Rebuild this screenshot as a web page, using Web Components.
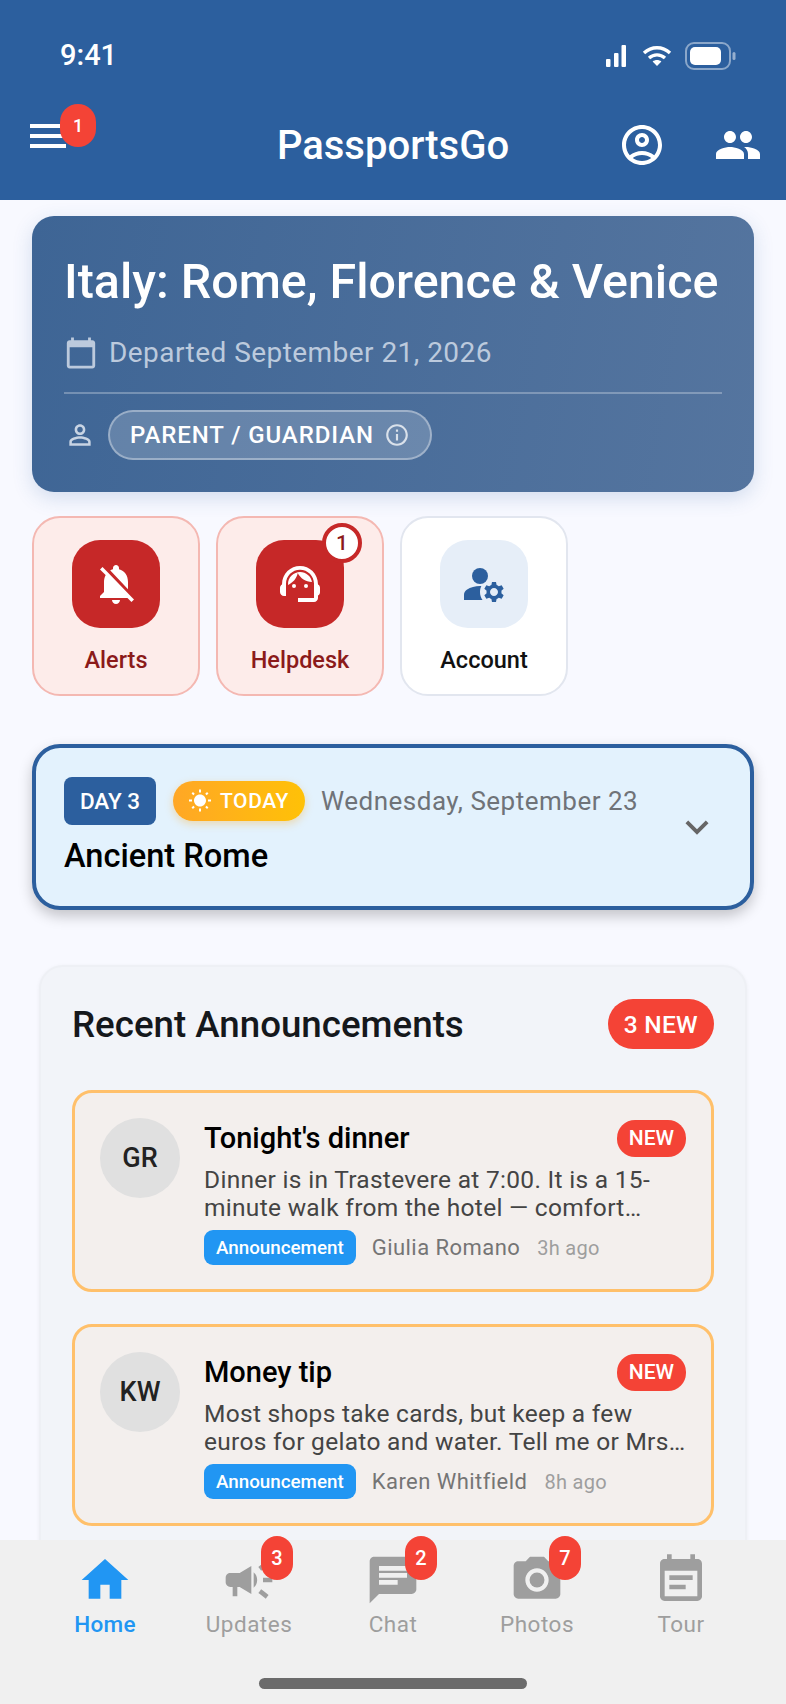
<!DOCTYPE html>
<html>
<head>
<meta charset="utf-8">
<title>PassportsGo</title>
<style>
html, body { margin: 0; padding: 0; height: 100%; }
body { font-family: Roboto, "Liberation Sans", sans-serif; background: #f8f9ff; overflow: hidden; }
</style>
</head>
<body>
<app-shell>
    <app-header></app-header>
    <trip-hero title-text="Italy: Rome, Florence &amp; Venice" date="Departed September 21, 2026" role="PARENT / GUARDIAN"></trip-hero>
    <action-row>
        <action-tile label="Alerts" icon="bell" tone="red"></action-tile>
        <action-tile label="Helpdesk" icon="agent" tone="red" count="1"></action-tile>
        <action-tile label="Account" icon="account" tone="blue"></action-tile>
    </action-row>
    <day-card day="DAY 3" date="Wednesday, September 23" place="Ancient Rome"></day-card>
    <announce-panel heading="Recent Announcements" count="3 NEW">
        <announce-card initials="GR" heading="Tonight's dinner" author="Giulia Romano" ago="3h ago"
            line1="Dinner is in Trastevere at 7:00. It is a 15-" line2="minute walk from the hotel — comfort…"></announce-card>
        <announce-card initials="KW" heading="Money tip" author="Karen Whitfield" ago="8h ago"
            line1="Most shops take cards, but keep a few" line2="euros for gelato and water. Tell me or Mrs…"></announce-card>
    </announce-panel>
    <tab-bar slot="tabs">
        <tab-item label="Home" icon="home" active></tab-item>
        <tab-item label="Updates" icon="campaign" count="3"></tab-item>
        <tab-item label="Chat" icon="chat" count="2"></tab-item>
        <tab-item label="Photos" icon="camera" count="7"></tab-item>
        <tab-item label="Tour" icon="note"></tab-item>
    </tab-bar>
</app-shell>

<script>
// material icon paths, all on a 24 box
const ICONS = {
    menuPerson: '<path d="M12 2C6.48 2 2 6.48 2 12s4.48 10 10 10 10-4.48 10-10S17.52 2 12 2zM7.35 18.5C8.66 17.56 10.26 17 12 17s3.34.56 4.65 1.5C15.34 19.44 13.74 20 12 20s-3.34-.56-4.65-1.5zm10.79-1.38C16.45 15.8 14.32 15 12 15s-4.45.8-6.14 2.12C4.7 15.73 4 13.95 4 12c0-4.42 3.58-8 8-8s8 3.58 8 8c0 1.95-.7 3.73-1.86 5.12z"/><path d="M12 6c-1.93 0-3.5 1.57-3.5 3.5S10.07 13 12 13s3.5-1.57 3.5-3.5S13.93 6 12 6zm0 5c-.83 0-1.5-.67-1.5-1.5S11.17 8 12 8s1.5.67 1.5 1.5S12.83 11 12 11z"/>',
    people: '<path d="M16 11c1.66 0 2.99-1.34 2.99-3S17.66 5 16 5c-1.66 0-3 1.34-3 3s1.34 3 3 3zm-8 0c1.66 0 2.99-1.34 2.99-3S9.66 5 8 5C6.34 5 5 6.34 5 8s1.34 3 3 3zm0 2c-2.33 0-7 1.17-7 3.5V19h14v-2.5c0-2.33-4.67-3.5-7-3.5zm8 0c-.29 0-.62.02-.97.05 1.16.84 1.97 1.97 1.97 3.45V19h6v-2.5c0-2.33-4.67-3.5-7-3.5z"/>',
    calendar: '<path d="M20 3h-1V1h-2v2H7V1H5v2H4c-1.1 0-2 .9-2 2v16c0 1.1.9 2 2 2h16c1.1 0 2-.9 2-2V5c0-1.1-.9-2-2-2zm0 18H4V8h16v13z"/>',
    person: '<path d="M12 5.9c1.16 0 2.1.94 2.1 2.1s-.94 2.1-2.1 2.1S9.9 9.16 9.9 8s.94-2.1 2.1-2.1m0 9c2.97 0 6.1 1.46 6.1 2.1v1.1H5.9V17c0-.64 3.13-2.1 6.1-2.1M12 4C9.79 4 8 5.79 8 8s1.79 4 4 4 4-1.79 4-4-1.79-4-4-4zm0 9c-2.67 0-8 1.34-8 4v3h16v-3c0-2.66-5.33-4-8-4z"/>',
    info: '<path d="M11 7h2v2h-2zm0 4h2v6h-2zm1-9C6.48 2 2 6.48 2 12s4.48 10 10 10 10-4.48 10-10S17.52 2 12 2zm0 18c-4.41 0-8-3.59-8-8s3.59-8 8-8 8 3.59 8 8-3.59 8-8 8z"/>',
    bell: '<path d="M20 18.69L7.84 6.14 5.27 3.49 4 4.76l2.8 2.8v.01c-.52.99-.8 2.16-.8 3.42v5l-2 2v1h13.73l2 2L21 19.72l-1-1.03zM12 22c1.11 0 2-.89 2-2h-4c0 1.11.89 2 2 2zm6-7.32V11c0-3.08-1.64-5.64-4.5-6.32V4c0-.83-.67-1.5-1.5-1.5s-1.5.67-1.5 1.5v.68c-.15.03-.29.08-.42.12-.1.03-.2.07-.3.11h-.01c-.2.08-.4.17-.59.27-.01 0-.01 0-.02.01L18 14.68z"/>',
    agent: '<path d="M21 12.22C21 6.73 16.74 3 12 3c-4.69 0-9 3.65-9 9.28-.6.34-1 .98-1 1.72v2c0 1.1.9 2 2 2h1v-6.1c0-3.87 3.13-7 7-7s7 3.13 7 7V19h-8v2h8c1.1 0 2-.9 2-2v-1.22c.59-.31 1-.92 1-1.64v-2.3c0-.7-.41-1.31-1-1.62z"/><circle cx="9" cy="13" r="1"/><circle cx="15" cy="13" r="1"/><path d="M18 11.03C17.52 8.18 15.04 6 12.05 6c-3.03 0-6.29 2.51-6.03 6.45 2.47-1.01 4.33-3.21 4.86-5.89 1.31 2.63 4 4.44 7.12 4.47z"/>',
    account: '<circle cx="10" cy="8" r="4"/><path d="M10.67 13.02c-.22-.01-.44-.02-.67-.02-2.42 0-4.68.67-6.61 1.82-.88.52-1.39 1.5-1.39 2.53V20h9.26c-.79-1.13-1.26-2.51-1.26-4 0-1.07.25-2.07.67-2.98z"/><path d="M20.75 16c0-.22-.03-.42-.06-.63l1.14-1.01-1-1.73-1.45.49c-.32-.27-.68-.48-1.08-.63L18 11h-2l-.3 1.49c-.4.15-.76.36-1.08.63l-1.45-.49-1 1.73 1.14 1.01c-.03.21-.06.41-.06.63s.03.42.06.63l-1.14 1.01 1 1.73 1.45-.49c.32.27.68.48 1.08.63L16 21h2l.3-1.49c.4-.15.76-.36 1.08-.63l1.45.49 1-1.73-1.14-1.01c.03-.21.06-.41.06-.63zM17 18c-1.1 0-2-.9-2-2s.9-2 2-2 2 .9 2 2-.9 2-2 2z"/>',
    sun: '<path d="M6.76 4.84l-1.8-1.79-1.41 1.41 1.79 1.79 1.42-1.41zM4 10.5H1v2h3v-2zm9-9.95h-2V3.5h2V.55zm7.45 3.91l-1.41-1.41-1.79 1.79 1.41 1.41 1.79-1.79zm-3.21 13.7l1.79 1.8 1.41-1.41-1.8-1.79-1.4 1.4zM20 10.5v2h3v-2h-3zm-8-5c-3.31 0-6 2.69-6 6s2.69 6 6 6 6-2.69 6-6-2.69-6-6-6zm-1 16.95h2V19.5h-2v2.95zm-7.45-3.91l1.41 1.41 1.79-1.8-1.41-1.41-1.79 1.8z"/>',
    chevron: '<path d="M16.59 8.59L12 13.17 7.41 8.59 6 10l6 6 6-6z"/>',
    home: '<path d="M10 20v-6h4v6h5v-8h3L12 3 2 12h3v8z"/>',
    campaign: '<path d="M18 11v2h4v-2h-4zm-2 6.61c.96.71 2.21 1.65 3.2 2.39.4-.53.8-1.07 1.2-1.6-.99-.74-2.24-1.68-3.2-2.4-.4.54-.8 1.08-1.2 1.61zM20.4 5.6c-.4-.53-.8-1.07-1.2-1.6-.99.74-2.24 1.68-3.2 2.4.4.53.8 1.07 1.2 1.6.96-.72 2.21-1.65 3.2-2.4zM4 9c-1.1 0-2 .9-2 2v2c0 1.1.9 2 2 2h1v4h2v-4h1l5 3V6L8 9H4zm11.5 3c0-1.33-.58-2.53-1.5-3.35v6.69c.92-.81 1.5-2.01 1.5-3.34z"/>',
    chat: '<path d="M20 2H4c-1.1 0-1.99.9-1.99 2L2 22l4-4h14c1.1 0 2-.9 2-2V4c0-1.1-.9-2-2-2zM6 9h12v2H6V9zm8 5H6v-2h8v2zm4-6H6V6h12v2z"/>',
    camera: '<circle cx="12" cy="12" r="3.2"/><path d="M9 2L7.17 4H4c-1.1 0-2 .9-2 2v12c0 1.1.9 2 2 2h16c1.1 0 2-.9 2-2V6c0-1.1-.9-2-2-2h-3.17L15 2H9zm3 15c-2.76 0-5-2.24-5-5s2.24-5 5-5 5 2.24 5 5-2.24 5-5 5z"/>',
    note: '<path d="M17 10H7v2h10v-2zm2-7h-1V1h-2v2H8V1H6v2H5c-1.11 0-1.99.9-1.99 2L3 19c0 1.1.89 2 2 2h14c1.1 0 2-.9 2-2V5c0-1.1-.9-2-2-2zm0 16H5V8h14v11zm-5-5H7v2h7v-2z"/>'
};

function icon(name, size) {
    return `<svg width="${size}" height="${size}" viewBox="0 0 24 24" fill="currentColor">${ICONS[name]}</svg>`;
}

class BaseElement extends HTMLElement {
    constructor() {
        super();
        this.attachShadow({ mode: 'open' });
    }
    connectedCallback() {
        const template = document.createElement('template');
        template.innerHTML = `<style>${this.getStyles()}</style>${this.getTemplate()}`;
        this.shadowRoot.appendChild(template.content.cloneNode(true));
    }
    attr(name) {
        return this.getAttribute(name) || '';
    }
}

class AppShell extends BaseElement {
    getStyles() {
        return `
        :host { display: flex; flex-direction: column; height: 1704px; width: 786px; overflow: hidden; }
        .main { flex: 1; min-height: 0; overflow: hidden; display: flex; flex-direction: column; }
        `;
    }
    getTemplate() {
        return `<slot name="header"></slot><div class="main"><slot></slot></div><slot name="tabs"></slot>`;
    }
}

class AppHeader extends BaseElement {
    connectedCallback() {
        this.slot = 'header';
        super.connectedCallback();
    }
    getStyles() {
        return `
        :host { display: block; height: 200px; background: #2c5f9e; color: #fff; flex: none; }
        .status { height: 90px; display: flex; align-items: center; padding: 20px 50px 0 60px; box-sizing: border-box; justify-content: space-between; }
        .time { font-size: 29px; font-weight: 500; }
        .status-icons { display: flex; align-items: center; gap: 16px; margin-top: 2px; }
        .bar { height: 110px; display: flex; align-items: center; padding: 0 24px 0 30px; position: relative; }
        .menu { width: 36px; height: 24px; display: flex; flex-direction: column; justify-content: space-between; position: relative; margin-top: -18px; }
        .menu i { display: block; height: 4px; background: #fff; }
        .badge { position: absolute; left: 30px; top: -20px; width: 36px; height: 43px; border-radius: 18px; background: #f44336; font-size: 18px; font-weight: 500; display: flex; align-items: center; justify-content: center; }
        .title { position: absolute; left: 0; right: 0; text-align: center; font-size: 40px; font-weight: 500; }
        .right { margin-left: auto; display: flex; align-items: center; gap: 48px; }
        svg { display: block; }
        `;
    }
    getTemplate() {
        return `
        <div class="status">
            <span class="time">9:41</span>
            <div class="status-icons">
                <svg width="20" height="22" viewBox="0 0 20 22" fill="#fff"><rect x="0" y="14" width="4.5" height="8" rx="1"/><rect x="8" y="8" width="4.5" height="14" rx="1"/><rect x="15.5" y="0" width="4.5" height="22" rx="1"/></svg>
                <svg width="30" height="20" viewBox="0 0 30 20" fill="none" stroke="#fff" stroke-width="3.4"><path d="M2 7C9.5 0 20.5 0 28 7"/><path d="M7 12c4.8-4.2 11.2-4.2 16 0"/><path d="M15 20l-4.4-4.6c2.6-2 6.2-2 8.8 0z" fill="#fff" stroke="none"/></svg>
                <svg width="51" height="28" viewBox="0 0 51 28" style="margin-left:-3px"><rect x="1" y="1" width="44" height="26" rx="8" fill="none" stroke="#fff" stroke-opacity=".45" stroke-width="2"/><rect x="5" y="5" width="31" height="18" rx="5" fill="#fff"/><rect x="47.5" y="10" width="3" height="8" rx="1.5" fill="#fff" fill-opacity=".5"/></svg>
            </div>
        </div>
        <div class="bar">
            <div class="menu"><i></i><i></i><i></i><span class="badge">1</span></div>
            <div class="title">PassportsGo</div>
            <div class="right">${icon('menuPerson', 48)}${icon('people', 48)}</div>
        </div>
        `;
    }
}

class TripHero extends BaseElement {
    getStyles() {
        return `
        :host { display: block; flex: none; margin: 16px 32px 0; height: 276px; box-sizing: border-box; padding: 34px 32px 0; border-radius: 22px; color: #fff;
            background: linear-gradient(100deg, #3e6595, #55759f); box-shadow: 0 6px 20px rgba(44,95,158,.18); }
        h1 { margin: 0; font-size: 48.4px; line-height: 64px; font-weight: 500; white-space: nowrap; }
        .date { display: flex; align-items: center; gap: 11px; margin-top: 21px; font-size: 28px; line-height: 36px; color: #bccadd; letter-spacing: .45px; }
        .rule { height: 2px; background: rgba(255,255,255,.28); margin: 21px 0 16px; }
        .role { display: flex; align-items: center; gap: 12px; color: #c8d4e4; }
        .pill { display: flex; align-items: center; gap: 10px; height: 50px; padding: 0 20px 0 20px; box-sizing: border-box; border: 2px solid rgba(255,255,255,.35); border-radius: 25px; background: rgba(255,255,255,.18); color: #fff; font-size: 24px; font-weight: 500; letter-spacing: .9px; }
        svg { display: block; flex: none; }
        .pill svg { opacity: .75; }
        `;
    }
    getTemplate() {
        return `
        <h1>${this.attr('title-text')}</h1>
        <div class="date">${icon('calendar', 34)}<span>${this.attr('date')}</span></div>
        <div class="rule"></div>
        <div class="role">${icon('person', 32)}<div class="pill"><span>${this.attr('role')}</span>${icon('info', 26)}</div></div>
        `;
    }
}

class ActionRow extends BaseElement {
    getStyles() {
        return `:host { display: flex; flex: none; gap: 16px; margin: 24px 32px 0; }`;
    }
    getTemplate() {
        return `<slot></slot>`;
    }
}

class ActionTile extends BaseElement {
    getStyles() {
        const red = this.attr('tone') === 'red';
        return `
        :host { display: flex; flex-direction: column; align-items: center; width: 168px; height: 180px; box-sizing: border-box; padding-top: 22px; border-radius: 28px;
            border: 2px solid ${red ? '#f4b8b2' : '#e2e6ef'}; background: ${red ? '#fdecea' : '#fff'}; }
        .box { width: 88px; height: 88px; border-radius: 28px; background: ${red ? '#c62828' : '#e6eef8'}; color: ${red ? '#fff' : '#2c5f9e'}; display: flex; align-items: center; justify-content: center; position: relative; }
        .label { margin-top: 16px; font-size: 23.5px; line-height: 32px; font-weight: 500; color: ${red ? '#8b1a1a' : '#111'}; }
        .count { position: absolute; top: -17px; right: -18px; width: 40px; height: 40px; box-sizing: border-box; border-radius: 50%; background: #fff; border: 4px solid #c62828; color: #8b1a1a; font-size: 21px; font-weight: 500; display: flex; align-items: center; justify-content: center; }
        svg { display: block; }
        `;
    }
    getTemplate() {
        const count = this.attr('count');
        return `
        <div class="box">${icon(this.attr('icon'), 48)}${count ? `<span class="count">${count}</span>` : ''}</div>
        <div class="label">${this.attr('label')}</div>
        `;
    }
}

class DayCard extends BaseElement {
    getStyles() {
        return `
        :host { display: flex; flex: none; align-items: center; margin: 48px 32px 0; height: 166px; box-sizing: border-box; padding: 0 28px; border: 4px solid #2c5f9e; border-radius: 28px; background: #e3f2fd; box-shadow: 0 6px 14px rgba(0,0,0,.22); }
        .col { flex: 1; min-width: 0; }
        .top { display: flex; align-items: center; }
        .day { width: 92px; height: 48px; border-radius: 8px; background: #2c5f9e; color: #fff; font-size: 22.5px; font-weight: 500; display: flex; align-items: center; justify-content: center; }
        .today { display: flex; align-items: center; gap: 8px; height: 40px; margin-left: 17px; padding: 0 16px 0 15px; border-radius: 20px; background: linear-gradient(90deg, #ffa726, #ffc107); box-shadow: 0 3px 8px rgba(255,160,0,.3); color: #fff; font-size: 21px; font-weight: 500; letter-spacing: .6px; }
        .date { margin-left: 16px; font-size: 26px; color: #6f7378; letter-spacing: .5px; white-space: nowrap; }
        .place { margin-top: 9px; font-size: 32.6px; line-height: 44px; font-weight: 500; color: #000; }
        .chev { color: #666; flex: none; margin-right: 2px; }
        svg { display: block; }
        `;
    }
    getTemplate() {
        return `
        <div class="col">
            <div class="top">
                <span class="day">${this.attr('day')}</span>
                <span class="today">${icon('sun', 24)}TODAY</span>
                <span class="date">${this.attr('date')}</span>
            </div>
            <div class="place">${this.attr('place')}</div>
        </div>
        <div class="chev">${icon('chevron', 46)}</div>
        `;
    }
}

class AnnouncePanel extends BaseElement {
    getStyles() {
        return `
        :host { display: block; flex: none; margin: 55px 39px 0; padding: 32px 31px 40px; box-sizing: border-box; border: 2px solid #eef0f5; border-radius: 24px; background: #f2f4f9; box-shadow: 0 1px 4px rgba(0,0,0,.05); }
        .head { display: flex; align-items: center; justify-content: space-between; margin-bottom: 41px; }
        h2 { margin: 0; font-size: 36.7px; font-weight: 500; color: #15181c; }
        .count { display: flex; align-items: center; height: 50px; padding: 0 16px; border-radius: 25px; background: #f44336; color: #fff; font-size: 24.5px; font-weight: 500; letter-spacing: .3px; }
        .list { display: flex; flex-direction: column; gap: 32px; }
        `;
    }
    getTemplate() {
        return `
        <div class="head"><h2>${this.attr('heading')}</h2><span class="count">${this.attr('count')}</span></div>
        <div class="list"><slot></slot></div>
        `;
    }
}

class AnnounceCard extends BaseElement {
    getStyles() {
        return `
        :host { display: flex; gap: 24px; height: 202px; box-sizing: border-box; padding: 25px 25px 0; border: 3px solid #ffc06b; border-radius: 20px; background: #f3efed; }
        .avatar { flex: none; width: 80px; height: 80px; border-radius: 50%; background: #e0e0e0; color: #222; font-size: 27px; font-weight: 500; display: flex; align-items: center; justify-content: center; }
        .col { flex: 1; min-width: 0; }
        .top { display: flex; align-items: center; justify-content: space-between; height: 38px; margin-top: 1px; }
        h3 { margin: 0; font-size: 29px; font-weight: 500; color: #000; }
        .new { display: flex; align-items: center; height: 37px; padding: 0 12px; border-radius: 18px; background: #f44336; color: #fff; font-size: 21px; font-weight: 500; }
        .body { margin-top: 9px; font-size: 24.5px; line-height: 28px; color: #444; letter-spacing: .3px; white-space: nowrap; }
        .meta { display: flex; align-items: center; margin-top: 8px; }
        .tag { height: 35px; padding: 0 12px; border-radius: 9px; background: #2196f3; color: #fff; font-size: 18.8px; font-weight: 500; display: flex; align-items: center; }
        .author { margin-left: 16px; font-size: 22px; color: #757575; letter-spacing: .45px; }
        .ago { margin-left: 17px; font-size: 20px; color: #9e9e9e; letter-spacing: .3px; }
        `;
    }
    getTemplate() {
        return `
        <div class="avatar">${this.attr('initials')}</div>
        <div class="col">
            <div class="top"><h3>${this.attr('heading')}</h3><span class="new">NEW</span></div>
            <div class="body"><div>${this.attr('line1')}</div><div>${this.attr('line2')}</div></div>
            <div class="meta"><span class="tag">Announcement</span><span class="author">${this.attr('author')}</span><span class="ago">${this.attr('ago')}</span></div>
        </div>
        `;
    }
}

class TabBar extends BaseElement {
    getStyles() {
        return `
        :host { display: block; flex: none; height: 164px; background: #f0f0f0; position: relative; }
        .items { display: grid; grid-template-columns: repeat(5, 144px); justify-content: center; padding-top: 12px; }
        .home { position: absolute; left: 259px; top: 138px; width: 268px; height: 11px; border-radius: 6px; background: #6b6b6b; }
        `;
    }
    getTemplate() {
        return `<div class="items"><slot></slot></div><div class="home"></div>`;
    }
}

class TabItem extends BaseElement {
    getStyles() {
        const on = this.hasAttribute('active');
        return `
        :host { display: flex; flex-direction: column; align-items: center; color: ${on ? '#2196f3' : '#9e9e9e'}; }
        .wrap { position: relative; width: 56px; height: 56px; }
        .count { position: absolute; left: 40px; top: -16px; width: 32px; height: 44px; border-radius: 16px; background: #f44336; color: #fff; font-size: 20px; font-weight: 500; display: flex; align-items: center; justify-content: center; }
        .label { margin-top: 1px; font-size: 22.5px; line-height: 30px; font-weight: ${on ? 500 : 400}; letter-spacing: ${on ? '.3px' : '.5px'}; }
        svg { display: block; }
        `;
    }
    getTemplate() {
        const count = this.attr('count');
        return `
        <div class="wrap">${icon(this.attr('icon'), 56)}${count ? `<span class="count">${count}</span>` : ''}</div>
        <div class="label">${this.attr('label')}</div>
        `;
    }
}

customElements.define('app-shell', AppShell);
customElements.define('app-header', AppHeader);
customElements.define('trip-hero', TripHero);
customElements.define('action-row', ActionRow);
customElements.define('action-tile', ActionTile);
customElements.define('day-card', DayCard);
customElements.define('announce-panel', AnnouncePanel);
customElements.define('announce-card', AnnounceCard);
customElements.define('tab-bar', TabBar);
customElements.define('tab-item', TabItem);
</script>
</body>
</html>
